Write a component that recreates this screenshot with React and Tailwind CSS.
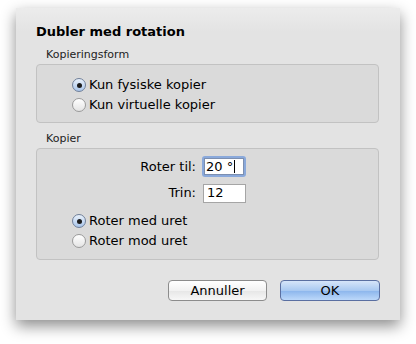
import React from "react";

function Radio({ checked, label }) {
  return (
    <div className="flex items-center h-[20px]">
      <div
        className={
          "w-[14px] h-[14px] rounded-full flex items-center justify-center border " +
          (checked
            ? "border-[#6f7f99] bg-[linear-gradient(#e9f1fb,#a9c5ea)]"
            : "border-[#9a9a9a] bg-[linear-gradient(#ffffff,#e4e4e4)]")
        }
      >
        {checked && <div className="w-[5px] h-[5px] rounded-full bg-[#1c1c1c]" />}
      </div>
      <span className="ml-[3px] text-[13px] text-black">{label}</span>
    </div>
  );
}

export default function App() {
  return (
    <div className="w-[416px] h-[344px] bg-white pt-[8px] pl-[16px] font-['DejaVu_Sans',sans-serif]">
      <div className="w-[384px] h-[312px] bg-[linear-gradient(#ececec,#e3e3e3_24px)] shadow-[0_6px_14px_rgba(0,0,0,0.45)] flex flex-col px-[20px] pt-[16px]">
        <div className="text-[13px] font-bold text-black leading-[16px]">Dubler med rotation</div>

        <div className="mt-[8px] ml-[10px] text-[11px] text-[#222] leading-[14px]">Kopieringsform</div>
        <div className="mt-[2px] w-[343px] h-[59px] rounded-[4px] border border-[#c2c2c2] bg-[#dadada] pl-[35px] pt-[10px] flex flex-col">
          <Radio checked label="Kun fysiske kopier" />
          <Radio label="Kun virtuelle kopier" />
        </div>

        <div className="mt-[9px] ml-[10px] text-[11px] text-[#222] leading-[14px]">Kopier</div>
        <div className="mt-[2px] w-[343px] h-[112px] rounded-[4px] border border-[#c2c2c2] bg-[#dadada] flex flex-col pt-[6px]">
          <div className="flex items-center h-[23px]">
            <span className="w-[159px] text-right text-[13px] text-black">Roter til:</span>
            <div className="ml-[6px] w-[44px] h-[21px] rounded-[3px] bg-[#8aa9db] p-[2px]">
              <div className="w-full h-full bg-white border border-[#7c8fb0] flex items-center pl-[1px] text-[13px] text-black leading-none">
                20 °<span className="ml-[1px] w-[1px] h-[13px] bg-black" />
              </div>
            </div>
          </div>
          <div className="flex items-center h-[20px] mt-[5px]">
            <span className="w-[159px] text-right text-[13px] text-black">Trin:</span>
            <div className="ml-[7px] w-[43px] h-[19px] bg-white border border-[#a5a5a5] flex items-center pl-[3px] text-[13px] text-black">
              12
            </div>
          </div>
          <div className="pl-[35px] mt-[8px] flex flex-col">
            <Radio checked label="Roter med uret" />
            <Radio label="Roter mod uret" />
          </div>
        </div>

        <div className="mt-[20px] flex justify-end gap-[13px] pr-[0px]">
          <button className="w-[99px] h-[21px] rounded-[4px] border border-[#8c8c8c] bg-[linear-gradient(#ffffff,#f2f2f2_50%,#e6e6e6_51%,#f7f7f7)] text-[13px] text-black leading-none">
            Annuller
          </button>
          <button className="w-[100px] h-[21px] rounded-[4px] border border-[#5a6fa1] bg-[linear-gradient(#d6e5f9,#a9c9f1_50%,#8bb5ec_51%,#bcd8fa)] text-[13px] text-black leading-none">
            OK
          </button>
        </div>
      </div>
    </div>
  );
}
